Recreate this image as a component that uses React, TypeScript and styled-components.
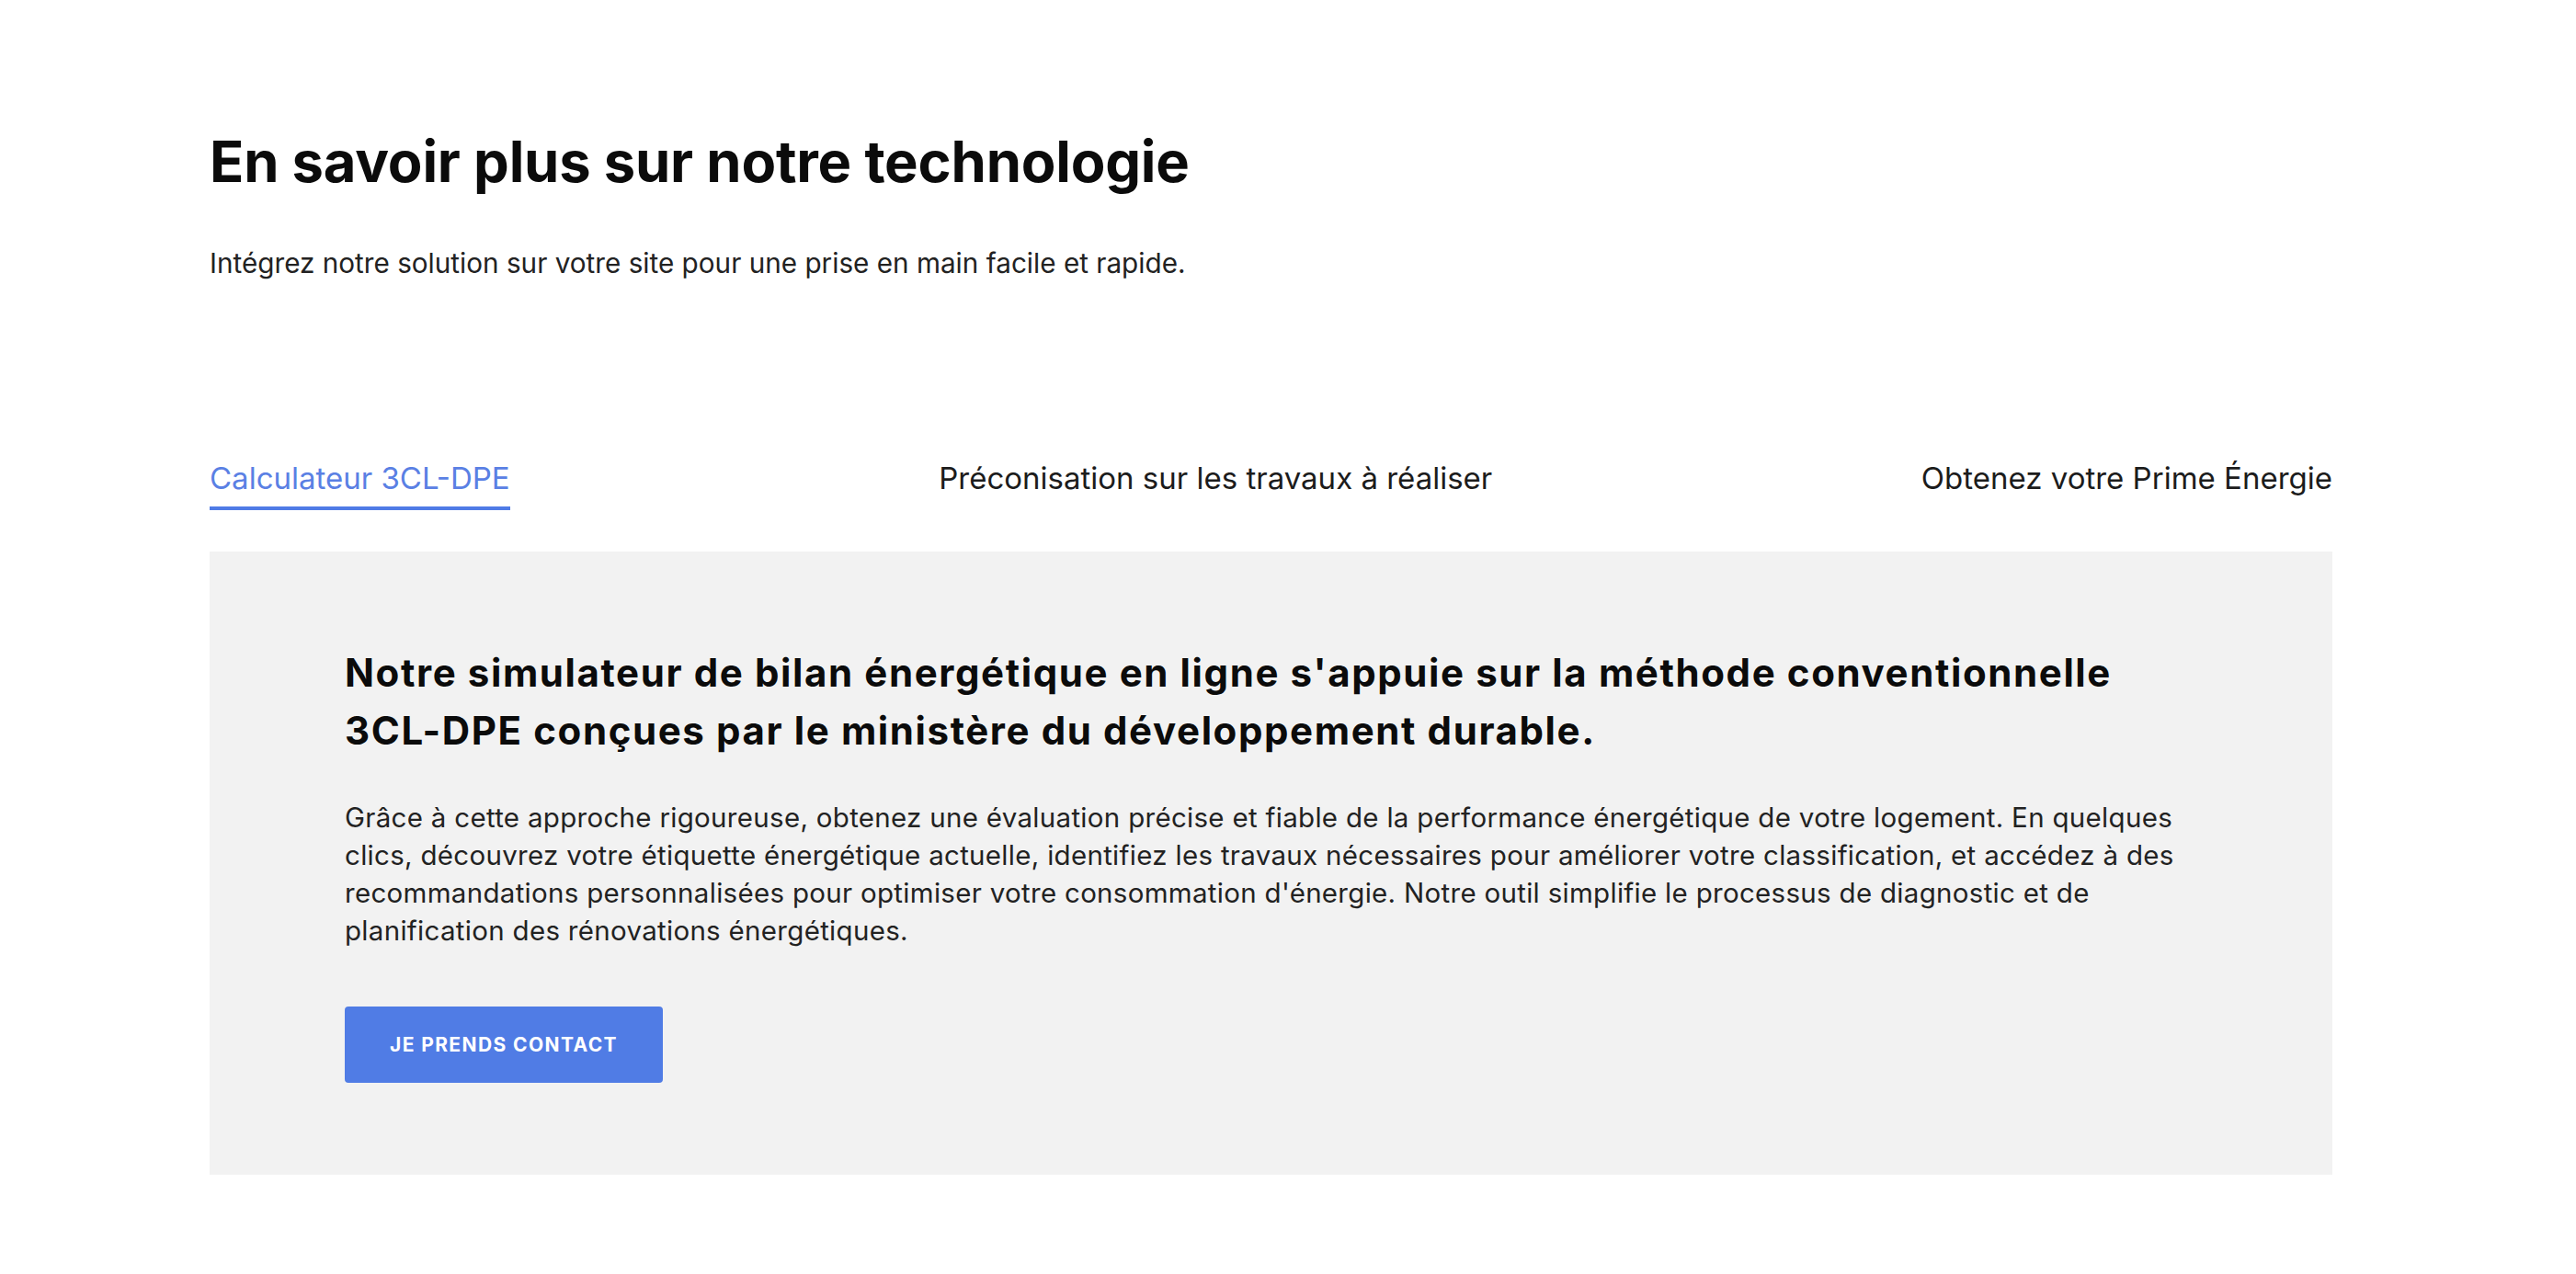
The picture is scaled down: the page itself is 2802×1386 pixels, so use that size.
import styled, { createGlobalStyle } from 'styled-components';

const GlobalStyle = createGlobalStyle`
  html, body {
    margin: 0;
    padding: 0;
    background: #ffffff;
  }
  body {
    font-family: Inter, "Liberation Sans", Arial, sans-serif;
    color: #1c1c1c;
  }
`;

const Section = styled.section`
  width: 2309px;
  margin-left: 228px;
  padding-top: 138px;
  padding-bottom: 110px;
`;

const Title = styled.h2`
  margin: 0;
  font-family: Inter, "Liberation Sans", sans-serif;
  font-weight: 700;
  font-size: 61.5px;
  line-height: 76px;
  color: #0b0b0b;
  letter-spacing: -0.2px;
`;

const Lead = styled.p`
  margin: 52px 0 0;
  font-size: 29.7px;
  line-height: 40px;
  color: #222;
`;

const TabList = styled.div`
  display: flex;
  justify-content: space-between;
  align-items: flex-start;
  margin-top: 193px;
`;

const Tab = styled.button<{ $active?: boolean }>`
  background: none;
  border: 0;
  padding: 0 0 10px;
  font-family: Inter, "Liberation Sans", sans-serif;
  font-size: 33px;
  line-height: 42px;
  color: ${(p) => (p.$active ? '#5a80e4' : '#1c1c1c')};
  border-bottom: 4px solid ${(p) => (p.$active ? '#4f7be6' : 'transparent')};
  cursor: pointer;
`;

const Panel = styled.div`
  margin-top: 45px;
  background: #f2f2f2;
  padding: 100px 147px 100px;
`;

const PanelTitle = styled.h3`
  margin: 0;
  font-family: Inter, "Liberation Sans", sans-serif;
  font-weight: 700;
  font-size: 42px;
  line-height: 63px;
  letter-spacing: 1.6px;
  color: #0b0b0b;
`;

const NoBreak = styled.span`
  white-space: nowrap;
`;

const PanelText = styled.p`
  margin: 43px 0 0;
  font-size: 29.5px;
  line-height: 41px;
  letter-spacing: 0.3px;
  color: #222;
`;

const CtaButton = styled.button`
  margin-top: 62px;
  width: 346px;
  height: 83px;
  border: 0;
  border-radius: 4px;
  background: #507ce5;
  color: #ffffff;
  font-family: Inter, "Liberation Sans", sans-serif;
  font-weight: 700;
  font-size: 21px;
  letter-spacing: 1.4px;
  cursor: pointer;
`;

const tabs = [
  'Calculateur 3CL-DPE',
  'Préconisation sur les travaux à réaliser',
  'Obtenez votre Prime Énergie',
];

export default function App() {
  return (
    <>
      <GlobalStyle />
      <Section>
        <Title>En savoir plus sur notre technologie</Title>
        <Lead>Intégrez notre solution sur votre site pour une prise en main facile et rapide.</Lead>
        <TabList>
          {tabs.map((t, i) => (
            <Tab key={t} $active={i === 0}>
              {t}
            </Tab>
          ))}
        </TabList>
        <Panel>
          <PanelTitle>
            Notre simulateur de bilan énergétique en ligne s'appuie sur la méthode conventionnelle{' '}
            <NoBreak>3CL-DPE</NoBreak> conçues par le ministère du développement durable.
          </PanelTitle>
          <PanelText>
            Grâce à cette approche rigoureuse, obtenez une évaluation précise et fiable de la
            performance énergétique de votre logement. En quelques clics, découvrez votre étiquette
            énergétique actuelle, identifiez les travaux nécessaires pour améliorer votre
            classification, et accédez à des recommandations personnalisées pour optimiser votre
            consommation d'énergie. Notre outil simplifie le processus de diagnostic et de
            planification des rénovations énergétiques.
          </PanelText>
          <CtaButton>JE PRENDS CONTACT</CtaButton>
        </Panel>
      </Section>
    </>
  );
}
